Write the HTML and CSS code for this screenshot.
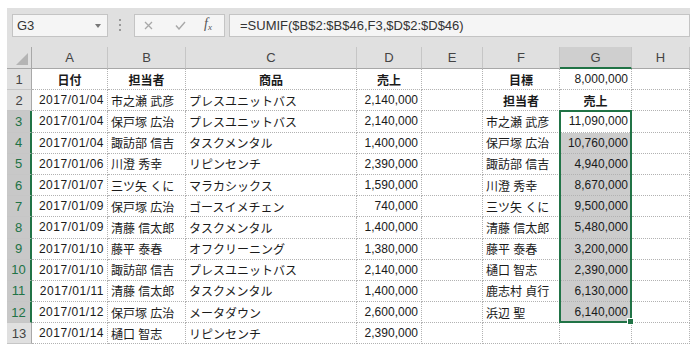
FILE: index.html
```html
<!DOCTYPE html>
<html lang="ja">
<head>
    <meta charset="UTF-8">
    <title>SUMIF - 担当者別売上</title>
    <link rel="stylesheet" href="styles.css">
</head>
<body>
    <div class="window">
        <div class="fbar">
            <div class="namebox"><span>G3</span><i class="caret"></i></div>
            <svg class="grip" width="4" height="12" viewBox="0 0 4 12">
                <rect x="1" y="0" width="2" height="2" fill="#9a9a9a"/>
                <rect x="1" y="5" width="2" height="2" fill="#9a9a9a"/>
                <rect x="1" y="10" width="2" height="2" fill="#9a9a9a"/>
            </svg>
            <div class="fxbox">
                <svg class="cancel" width="9" height="9" viewBox="0 0 9 9">
                    <path d="M1 1L8 8M8 1L1 8" stroke="#a8a8a8" stroke-width="1.3" fill="none"/>
                </svg>
                <svg class="enter" width="11" height="9" viewBox="0 0 11 9">
                    <path d="M1 4.5L4 8L10 1" stroke="#a8a8a8" stroke-width="1.4" fill="none"/>
                </svg>
                <span class="fx"><i>f</i><span class="fxsub">x</span></span>
            </div>
            <div class="formula">=SUMIF($B$2:$B$46,F3,$D$2:$D$46)</div>
        </div>

        <div class="sheet">
            <div class="corner"><span></span></div>
            <div class="ch">A</div>
            <div class="ch">B</div>
            <div class="ch">C</div>
            <div class="ch">D</div>
            <div class="ch">E</div>
            <div class="ch">F</div>
            <div class="ch hl">G</div>
            <div class="ch">H</div>

            <div class="rh">1</div>
            <div class="b m">日付</div><div class="b m">担当者</div><div class="b m">商品</div><div class="b m">売上</div><div></div>
            <div class="b m">目標</div><div class="n">8,000,000</div><div></div>

            <div class="rh">2</div>
            <div class="n d">2017/01/04</div><div>市之瀬 武彦</div><div>プレスユニットバス</div><div class="n">2,140,000</div><div></div>
            <div class="b m">担当者</div><div class="b m">売上</div><div></div>

            <div class="rh hl">3</div>
            <div class="n d">2017/01/04</div><div>保戸塚 広治</div><div>プレスユニットバス</div><div class="n">2,140,000</div><div></div>
            <div>市之瀬 武彦</div><div class="n">11,090,000</div><div></div>

            <div class="rh hl">4</div>
            <div class="n d">2017/01/04</div><div>諏訪部 信吉</div><div>タスクメンタル</div><div class="n">1,400,000</div><div></div>
            <div>保戸塚 広治</div><div class="n sel">10,760,000</div><div></div>

            <div class="rh hl">5</div>
            <div class="n d">2017/01/06</div><div>川澄 秀幸</div><div>リピンセンチ</div><div class="n">2,390,000</div><div></div>
            <div>諏訪部 信吉</div><div class="n sel">4,940,000</div><div></div>

            <div class="rh hl">6</div>
            <div class="n d">2017/01/07</div><div>三ツ矢 くに</div><div>マラカシックス</div><div class="n">1,590,000</div><div></div>
            <div>川澄 秀幸</div><div class="n sel">8,670,000</div><div></div>

            <div class="rh hl">7</div>
            <div class="n d">2017/01/09</div><div>保戸塚 広治</div><div>ゴースイメチェン</div><div class="n">740,000</div><div></div>
            <div>三ツ矢 くに</div><div class="n sel">9,500,000</div><div></div>

            <div class="rh hl">8</div>
            <div class="n d">2017/01/09</div><div>清藤 信太郎</div><div>タスクメンタル</div><div class="n">1,400,000</div><div></div>
            <div>清藤 信太郎</div><div class="n sel">5,480,000</div><div></div>

            <div class="rh hl">9</div>
            <div class="n d">2017/01/10</div><div>藤平 泰春</div><div>オフクリーニング</div><div class="n">1,380,000</div><div></div>
            <div>藤平 泰春</div><div class="n sel">3,200,000</div><div></div>

            <div class="rh hl">10</div>
            <div class="n d">2017/01/10</div><div>諏訪部 信吉</div><div>プレスユニットバス</div><div class="n">2,140,000</div><div></div>
            <div>樋口 智志</div><div class="n sel">2,390,000</div><div></div>

            <div class="rh hl">11</div>
            <div class="n d">2017/01/11</div><div>清藤 信太郎</div><div>タスクメンタル</div><div class="n">1,400,000</div><div></div>
            <div>鹿志村 貞行</div><div class="n sel">6,130,000</div><div></div>

            <div class="rh hl">12</div>
            <div class="n d">2017/01/12</div><div>保戸塚 広治</div><div>メータダウン</div><div class="n">2,600,000</div><div></div>
            <div>浜辺 聖</div><div class="n sel">6,140,000</div><div></div>

            <div class="rh">13</div>
            <div class="n d">2017/01/14</div><div>樋口 智志</div><div>リピンセンチ</div><div class="n">2,390,000</div><div></div>
            <div></div><div></div><div></div>

            <!-- selected range G3:G12 -->
            <div class="selection"></div>
        </div>
    </div>
</body>
</html>
```

FILE: styles.css
```css
body {
    margin: 0;
    background-color: #ffffff;
    font-family: "Liberation Sans", "Noto Sans CJK JP", sans-serif;
    font-size: 12px;
    color: #1a1a1a;
}
.window {
    margin: 8px 0 0 7px;
    width: 683px;
    background-color: #e0e0e0;
}

/* formula bar */
.fbar {
    display: flex;
    align-items: flex-start;
    height: 39px;
    padding: 6px 0 0 5px;
    box-sizing: border-box;
}
.namebox, .fxbox, .formula {
    height: 23px;
    box-sizing: border-box;
    border: 1px solid #c4c4c4;
    background-color: #f5f5f5;
    display: flex;
    align-items: center;
}
.namebox {
    width: 96px;
    justify-content: space-between;
    padding: 0 6px 0 4px;
    font-size: 13px;
    color: #333;
}
.caret {
    border-left: 3px solid transparent;
    border-right: 3px solid transparent;
    border-top: 4px solid #777;
}
.grip {
    margin: 5px 12px 0 10px;
}
.fxbox {
    width: 91px;
    margin-right: 4px;
    padding-left: 9px;
}
.enter {
    margin-left: 22px;
}
.fx {
    margin-left: 18px;
    font-family: "Liberation Serif", serif;
    font-size: 14px;
    line-height: 14px;
    color: #555;
}
.fxsub {
    font-size: 9px;
    font-style: italic;
    vertical-align: -2px;
}
.formula {
    flex: 1;
    padding-left: 10px;
    font-size: 13px;
    color: #333;
}

/* sheet grid */
.sheet {
    position: relative;
    display: grid;
    grid-template-columns: 25px 76px 78px 171px 65px 61px 77px 72px 58px;
    grid-template-rows: 22px repeat(13, 21.2px);
    background-color: #ffffff;
}
.sheet > div {
    display: flex;
    align-items: center;
    padding: 0 3px;
    border-right: 1px dotted #b2b2b2;
    border-bottom: 1px dotted #b2b2b2;
    white-space: nowrap;
    overflow: hidden;
}
.sheet > .n {
    justify-content: flex-end;
}
.sheet > .m {
    justify-content: center;
}
.b {
    font-weight: bold;
}
.d {
    letter-spacing: 0.5px;
}
.sheet > .sel {
    background-color: #cccccc;
}

.sheet > .corner {
    background-color: #e0e0e0;
    justify-content: flex-end;
    align-items: flex-end;
    padding: 0 3px 3px 0;
    border-right: 1px solid #a8a8a8;
    border-bottom: 1px solid #a8a8a8;
}
.corner span {
    width: 0;
    height: 0;
    border-left: 12px solid transparent;
    border-bottom: 12px solid #b4b4b4;
}
.sheet > .ch {
    background-color: #e0e0e0;
    justify-content: center;
    color: #444;
    font-size: 13px;
    border-right: 1px solid #c6c6c6;
    border-bottom: 1px solid #a8a8a8;
}
.sheet > .ch.hl {
    background-color: #cfcfcf;
    border-bottom: 2px solid #217346;
}
.sheet > .rh {
    background-color: #e0e0e0;
    justify-content: center;
    color: #444;
    font-size: 13px;
    border-right: 1px solid #a8a8a8;
    border-bottom: 1px solid #c6c6c6;
}
.sheet > .rh.hl {
    background-color: #c8c8c8;
    color: #217346;
    border-right: 2px solid #217346;
}

.sheet > .selection {
    position: absolute;
    grid-column: 8 / 9;
    grid-row: 4 / 14;
    top: -1px;
    left: -1px;
    right: 0;
    bottom: 0;
    padding: 0;
    border: 2px solid #217346;
    overflow: visible;
    pointer-events: none;
}
.selection::after {
    content: "";
    position: absolute;
    right: -4px;
    bottom: -4px;
    width: 5px;
    height: 5px;
    background-color: #217346;
    border: 1px solid #ffffff;
}
```
